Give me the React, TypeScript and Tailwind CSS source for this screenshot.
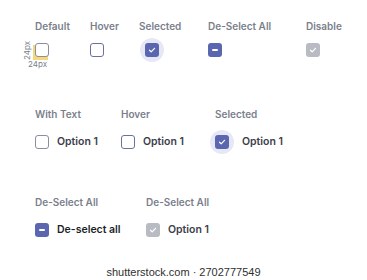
const font = { fontFamily: '"Inter", "Open Sans", sans-serif' };

type Kind = "empty" | "hover" | "checked" | "minus" | "disabled";

function Check({ kind, halo = false }: { kind: Kind; halo?: boolean }) {
  const box =
    kind === "empty"
      ? "border-[1.5px] border-[#8a8ea0] bg-white"
      : kind === "hover"
        ? "border-[1.5px] border-[#6a70a0] bg-white"
        : kind === "disabled"
          ? "bg-[#b9bbc4]"
          : "bg-[#5a67b0]";
  return (
    <span className="relative flex h-[14px] w-[14px] shrink-0 items-center justify-center">
      {halo && <span className="absolute -inset-[5px] rounded-full bg-[#e6e8f5]" />}
      <span className={`relative flex h-[14px] w-[14px] items-center justify-center rounded-[3px] ${box}`}>
        {(kind === "checked" || kind === "disabled") && (
          <svg width="8" height="8" viewBox="0 0 8 8" fill="none">
            <path d="M1.5 4.2 3.2 5.8 6.5 2.3" stroke="white" strokeWidth="1.2" strokeLinecap="round" strokeLinejoin="round" />
          </svg>
        )}
        {kind === "minus" && <span className="h-[1.5px] w-[6px] rounded bg-white" />}
      </span>
    </span>
  );
}

function Label({ children }: { children: string }) {
  return <div className="h-3 text-[10px] font-semibold leading-3 text-[#7b7f8c]">{children}</div>;
}

function Opt({ kind, text, halo, dark }: { kind: Kind; text: string; halo?: boolean; dark?: boolean }) {
  return (
    <div className="flex items-center gap-2">
      <Check kind={kind} halo={halo} />
      <span
        className={`text-[10.5px] font-semibold leading-[14px] ${dark ? "text-[#1d1f29]" : "text-[#3b3e4b]"} ${halo ? "ml-[5px]" : ""}`}
      >
        {text}
      </span>
    </div>
  );
}

export default function App() {
  return (
    <div className="h-[280px] w-[367px] overflow-hidden bg-white" style={font}>
      <div className="flex pl-[35px] pt-5">
        <div className="w-[55px]">
          <Label>Default</Label>
          <div className="relative mt-[11px] h-[14px] w-[14px]">
            <span className="absolute left-[-2px] top-[2px] h-[15px] w-[15px] bg-[#f6d77a]" />
            <span className="absolute left-[-17px] top-[3px] -rotate-90 text-[8px] leading-[9px] text-[#7b7f8c]">24px</span>
            <span className="absolute left-[-7px] top-[17px] text-[8px] leading-[9px] text-[#7b7f8c]">24px</span>
            <span className="relative">
              <Check kind="empty" />
            </span>
          </div>
        </div>
        <div className="w-[49px]">
          <Label>Hover</Label>
          <div className="mt-[11px]">
            <Check kind="hover" />
          </div>
        </div>
        <div className="w-[69px]">
          <Label>Selected</Label>
          <div className="mt-[11px] pl-[6px]">
            <Check kind="checked" halo />
          </div>
        </div>
        <div className="w-[98px]">
          <Label>De-Select All</Label>
          <div className="mt-[11px]">
            <Check kind="minus" />
          </div>
        </div>
        <div>
          <Label>Disable</Label>
          <div className="mt-[11px]">
            <Check kind="disabled" />
          </div>
        </div>
      </div>

      <div className="mt-[51px] flex pl-[35px]">
        <div className="w-[86px]">
          <Label>With Text</Label>
          <div className="mt-[15px]">
            <Opt kind="empty" text="Option 1" />
          </div>
        </div>
        <div className="w-[94px]">
          <Label>Hover</Label>
          <div className="mt-[15px]">
            <Opt kind="hover" text="Option 1" />
          </div>
        </div>
        <div>
          <Label>Selected</Label>
          <div className="mt-[15px]">
            <Opt kind="checked" text="Option 1" halo />
          </div>
        </div>
      </div>

      <div className="mt-[47px] flex pl-[35px]">
        <div className="w-[111px]">
          <Label>De-Select All</Label>
          <div className="mt-[15px]">
            <Opt kind="minus" text="De-select all" dark />
          </div>
        </div>
        <div>
          <Label>De-Select All</Label>
          <div className="mt-[15px]">
            <Opt kind="disabled" text="Option 1" />
          </div>
        </div>
      </div>

      <div
        className="mt-[28px] text-center text-[11px] leading-[14px] text-[#2f2f2f]"
        style={{ fontFamily: '"Liberation Sans", sans-serif' }}
      >
        shutterstock.com · 2702777549
      </div>
    </div>
  );
}
